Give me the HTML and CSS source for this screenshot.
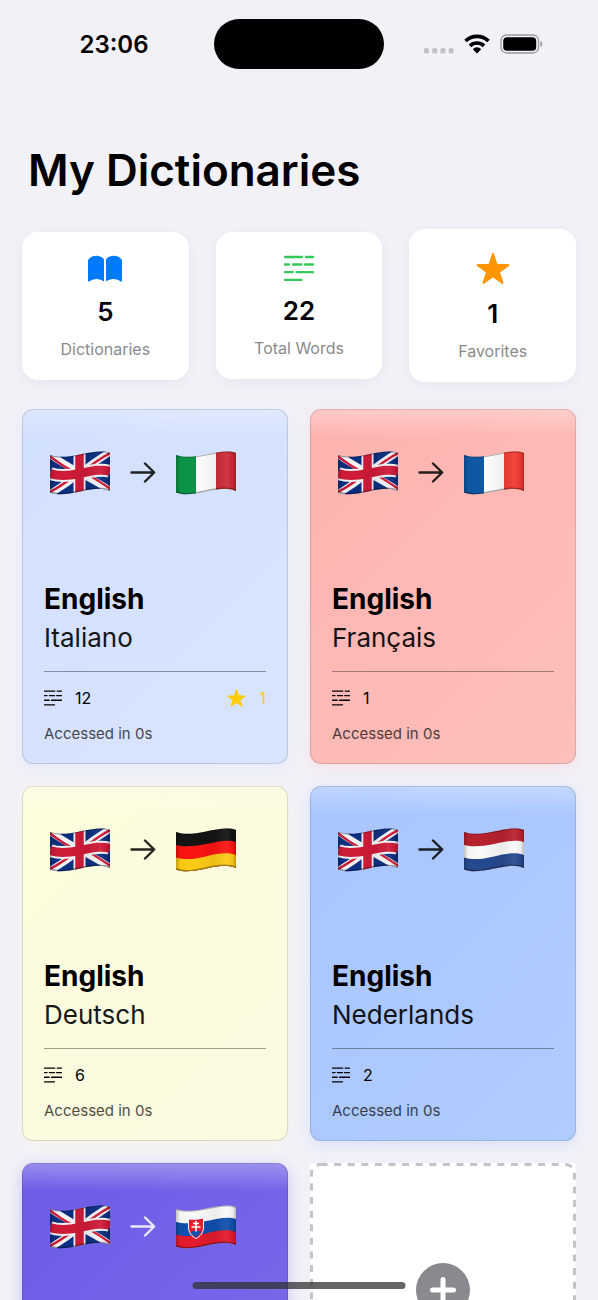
FILE: index.html
```
<!DOCTYPE html>
<html lang="en">

<head>
    <meta charset="UTF-8">
    <meta name="viewport" content="width=device-width, initial-scale=1.0">
    <title>My Dictionaries</title>
    <link rel="stylesheet" href="styles.css">
</head>

<body>
    <!-- Shared icons and flags -->
    <svg class="sprite" aria-hidden="true">
        <defs>
            <clipPath id="wave">
                <path d="M0 4 C8 7 18 6 30 3.5 S52 -1 60 2 V40 C52 36.500 44 37.500 30 40.500 S8 44.500 0 41.500 Z" />
            </clipPath>
            <linearGradient id="fold" x1="0" y1="0" x2="1" y2="0">
                <stop offset="0" stop-color="#000" stop-opacity=".22" />
                <stop offset=".07" stop-color="#000" stop-opacity=".02" />
                <stop offset=".3" stop-color="#000" stop-opacity="0" />
                <stop offset=".64" stop-color="#000" stop-opacity=".06" />
                <stop offset=".85" stop-color="#fff" stop-opacity=".06" />
                <stop offset=".94" stop-color="#000" stop-opacity=".04" />
                <stop offset="1" stop-color="#000" stop-opacity=".25" />
            </linearGradient>

            <symbol id="shade" viewBox="0 0 60 44">
                <g clip-path="url(#wave)">
                    <rect width="60" height="44" fill="url(#fold)" />
                    <path d="M0 4 C8 7 18 6 30 3.500 S52 -1 60 2" fill="none" stroke="#000" stroke-opacity=".28" stroke-width="2" />
                    <path d="M60 40 C52 36.500 44 37.500 30 40.500 S8 44.500 0 41.500" fill="none" stroke="#000" stroke-opacity=".35" stroke-width="2.500" />
                </g>
            </symbol>

            <symbol id="flag-gb" viewBox="0 0 60 44">
                <g clip-path="url(#wave)">
                    <rect width="60" height="44" fill="#0b2f80" />
                    <g fill="none" stroke="#f4f4f6" stroke-width="7">
                        <path d="M-2 2 C10 11 20 16 30 22 S50 32 62 41" />
                        <path d="M-2 44 C10 37 20 30 30 22 S50 7 62 0" />
                    </g>
                    <g fill="none" stroke="#cf1b38" stroke-width="2.400">
                        <path d="M-2 4 C8 12 16 17 26 22" />
                        <path d="M34 21 C44 27 52 32 62 39" />
                        <path d="M-2 42 C8 37 18 30 27 23" />
                        <path d="M32 22 C42 13 50 7 62 1" />
                    </g>
                    <path d="M0 22.500 C8 25.500 18 25 30 22.500 S52 17.500 60 20.500" fill="none" stroke="#f4f4f6" stroke-width="13" />
                    <path d="M29.500 0 V44" stroke="#f4f4f6" stroke-width="12" />
                    <path d="M0 22.500 C8 25.500 18 25 30 22.500 S52 17.500 60 20.500" fill="none" stroke="#cf1b38" stroke-width="9" />
                    <path d="M29.500 0 V44" stroke="#cf1b38" stroke-width="8.500" />
                </g>
                <use href="#shade" width="60" height="44" />
            </symbol>

            <symbol id="flag-it" viewBox="0 0 60 44">
                <g clip-path="url(#wave)">
                    <rect width="20" height="44" fill="#0b9447" />
                    <rect x="20" width="20" height="44" fill="#fff" />
                    <rect x="40" width="20" height="44" fill="#cb2a36" />
                </g>
                <use href="#shade" width="60" height="44" />
            </symbol>

            <symbol id="flag-fr" viewBox="0 0 60 44">
                <g clip-path="url(#wave)">
                    <rect width="20" height="44" fill="#0f58a4" />
                    <rect x="20" width="20" height="44" fill="#fff" />
                    <rect x="40" width="20" height="44" fill="#f03a32" />
                </g>
                <use href="#shade" width="60" height="44" />
            </symbol>

            <symbol id="flag-de" viewBox="0 0 60 44">
                <g clip-path="url(#wave)">
                    <rect width="60" height="44" fill="#141414" />
                    <path d="M0 17 C8 19 18 18.500 30 16 S52 11 60 14 V44 H0 Z" fill="#fb1512" />
                    <path d="M0 29.500 C8 32 18 31.500 30 28.500 S52 24 60 27 V44 H0 Z" fill="#fccb16" />
                </g>
                <use href="#shade" width="60" height="44" />
            </symbol>

            <symbol id="flag-nl" viewBox="0 0 60 44">
                <g clip-path="url(#wave)">
                    <rect width="60" height="44" fill="#b8222f" />
                    <path d="M0 17 C8 19 18 18.500 30 16 S52 11 60 14 V44 H0 Z" fill="#fafafa" />
                    <path d="M0 29.500 C8 32 18 31.500 30 28.500 S52 24 60 27 V44 H0 Z" fill="#264a90" />
                </g>
                <use href="#shade" width="60" height="44" />
            </symbol>

            <symbol id="flag-sk" viewBox="0 0 60 44">
                <g clip-path="url(#wave)">
                    <rect width="60" height="44" fill="#fafafa" />
                    <path d="M0 17 C8 19 18 18.500 30 16 S52 11 60 14 V44 H0 Z" fill="#1050ae" />
                    <path d="M0 29.500 C8 32 18 31.500 30 28.500 S52 24 60 27 V44 H0 Z" fill="#e31b2c" />
                </g>
                <use href="#shade" width="60" height="44" />
                <path d="M12.500 14 Q20 15 27.500 13 V22 C27.500 28 24 31.500 20 33.500 C16 31.500 12.500 28 12.500 22 Z" fill="#e31b2c" stroke="#fff" stroke-width="1" />
                <path d="M15 28 Q17.500 24.500 20 26.500 Q22.500 24.500 25 27 Q23 31 20 32.500 Q17 31 15 28 Z" fill="#1050ae" />
                <path d="M20 16 V26.500 M17 18.500 H23 M15.500 22 H24.500" fill="none" stroke="#fff" stroke-width="1.600" />
            </symbol>

            <symbol id="icon-arrow" viewBox="0 0 26 22">
                <path d="M1.500 10.500 H24 M15 1.500 L24.200 10.500 L15 19.500" fill="none" stroke="currentColor" stroke-width="2.400" stroke-linecap="round" stroke-linejoin="round" />
            </symbol>

            <symbol id="icon-words" viewBox="0 0 30 26">
                <path d="M1 1.500 H18 M22 1.500 H29 M1 9 H5 M9 9 H17.500 M21 9 H29 M1 16.700 H8.500 M12.500 16.700 H29 M1 24.400 H17.500" fill="none" stroke="currentColor" stroke-width="2.300" stroke-linecap="round" />
            </symbol>

            <symbol id="icon-star" viewBox="0 0 34 32">
                <path d="M17 1.500 L20.700 12.500 L32.300 12.600 L23 19.500 L26.500 30.500 L17 23.800 L7.500 30.500 L11 19.500 L1.700 12.600 L13.300 12.500 Z" fill="currentColor" stroke="currentColor" stroke-width="2" stroke-linejoin="round" />
            </symbol>
        </defs>
    </svg>

    <div class="app">
        <header class="status-bar">
            <span class="time">23:06</span>
            <span class="island"></span>
            <div class="indicators">
                <svg class="dots" viewBox="0 0 30 20" aria-hidden="true">
                    <rect x="0" y="14" width="5" height="5.500" rx="1.500" />
                    <rect x="8.200" y="14" width="5" height="5.500" rx="1.500" />
                    <rect x="16.400" y="14" width="5" height="5.500" rx="1.500" />
                    <rect x="24.600" y="14" width="5" height="5.500" rx="1.500" />
                </svg>
                <svg class="wifi" viewBox="0 0 26 20" aria-hidden="true">
                    <path d="M1.500 7 A16.500 16.500 0 0 1 24.500 7 M6 11.800 A10.200 10.200 0 0 1 20 11.800" fill="none" stroke="#000" stroke-width="3.700" />
                    <path d="M8.800 15.300 A5.500 5.500 0 0 1 17.200 15.300 L13 19.500 Z" />
                </svg>
                <svg class="battery" viewBox="0 0 43 20" aria-hidden="true">
                    <rect x="1" y="1" width="37.500" height="18" rx="5.500" fill="none" stroke="#9b9aa0" stroke-width="1.300" />
                    <rect x="3.200" y="3.200" width="33" height="13.600" rx="3.800" />
                    <path d="M40.300 7 C43 8 43 12 40.300 13 Z" fill="#9b9aa0" />
                </svg>
            </div>
        </header>

        <main class="content">
            <h1>My Dictionaries</h1>

            <section class="stats">
                <div class="stat">
                    <svg class="stat-icon book" viewBox="0 0 36 30" aria-hidden="true">
                        <path d="M1 6 C4 .8 13.500 0 17 5.500 V27.500 C13 24 6 24 2.200 27.500 Q1 28 1 26.500 Z M19 5.500 C22.500 0 32 .8 35 6 V26.500 Q35 28 33.800 27.500 C30 24 23 24 19 27.500 Z" fill="currentColor" />
                    </svg>
                    <strong>5</strong>
                    <span>Dictionaries</span>
                </div>
                <div class="stat">
                    <svg class="stat-icon words" aria-hidden="true"><use href="#icon-words" /></svg>
                    <strong>22</strong>
                    <span>Total Words</span>
                </div>
                <div class="stat">
                    <svg class="stat-icon star" aria-hidden="true"><use href="#icon-star" /></svg>
                    <strong>1</strong>
                    <span>Favorites</span>
                </div>
            </section>

            <section class="grid">
                <article class="card card-it">
                    <div class="flags">
                        <svg class="flag"><use href="#flag-gb" /></svg>
                        <svg class="arrow"><use href="#icon-arrow" /></svg>
                        <svg class="flag"><use href="#flag-it" /></svg>
                    </div>
                    <h2>English</h2>
                    <p class="target">Italiano</p>
                    <div class="meta">
                        <svg class="words-icon"><use href="#icon-words" /></svg>
                        <span>12</span>
                        <span class="favorite">
                            <svg class="star-icon"><use href="#icon-star" /></svg>
                            1
                        </span>
                    </div>
                    <p class="accessed">Accessed in 0s</p>
                </article>

                <article class="card card-fr">
                    <div class="flags">
                        <svg class="flag"><use href="#flag-gb" /></svg>
                        <svg class="arrow"><use href="#icon-arrow" /></svg>
                        <svg class="flag"><use href="#flag-fr" /></svg>
                    </div>
                    <h2>English</h2>
                    <p class="target">Français</p>
                    <div class="meta">
                        <svg class="words-icon"><use href="#icon-words" /></svg>
                        <span>1</span>
                    </div>
                    <p class="accessed">Accessed in 0s</p>
                </article>

                <article class="card card-de">
                    <div class="flags">
                        <svg class="flag"><use href="#flag-gb" /></svg>
                        <svg class="arrow"><use href="#icon-arrow" /></svg>
                        <svg class="flag"><use href="#flag-de" /></svg>
                    </div>
                    <h2>English</h2>
                    <p class="target">Deutsch</p>
                    <div class="meta">
                        <svg class="words-icon"><use href="#icon-words" /></svg>
                        <span>6</span>
                    </div>
                    <p class="accessed">Accessed in 0s</p>
                </article>

                <article class="card card-nl">
                    <div class="flags">
                        <svg class="flag"><use href="#flag-gb" /></svg>
                        <svg class="arrow"><use href="#icon-arrow" /></svg>
                        <svg class="flag"><use href="#flag-nl" /></svg>
                    </div>
                    <h2>English</h2>
                    <p class="target">Nederlands</p>
                    <div class="meta">
                        <svg class="words-icon"><use href="#icon-words" /></svg>
                        <span>2</span>
                    </div>
                    <p class="accessed">Accessed in 0s</p>
                </article>

                <article class="card card-sk">
                    <div class="flags">
                        <svg class="flag"><use href="#flag-gb" /></svg>
                        <svg class="arrow"><use href="#icon-arrow" /></svg>
                        <svg class="flag"><use href="#flag-sk" /></svg>
                    </div>
                </article>

                <button type="button" class="add-card" aria-label="Add dictionary">
                    <svg class="outline" aria-hidden="true"><rect x="1.500" y="1.500" rx="9" /></svg>
                    <svg class="plus" viewBox="0 0 54 54" aria-hidden="true">
                        <circle cx="27" cy="27" r="27" fill="#8a8a8e" />
                        <path d="M27 16.500 V37.500 M16.500 27 H37.500" stroke="#fff" stroke-width="5" stroke-linecap="round" />
                    </svg>
                </button>
            </section>
        </main>

        <div class="home-indicator"></div>
    </div>
</body>

</html>
```
FILE: styles.css
```
/* General Styles */
* {
    box-sizing: border-box;
}

body {
    margin: 0;
    font-family: Inter, "Liberation Sans", sans-serif;
    background-color: #f2f1f8;
    color: #000;
}

h1,
h2,
p {
    margin: 0;
}

svg {
    display: block;
    flex-shrink: 0;
}

.sprite {
    position: absolute;
    width: 0;
    height: 0;
}

.app {
    height: 100vh;
    overflow-y: auto;
    scrollbar-width: none;
}

/* Status Bar */
.status-bar {
    display: grid;
    grid-template-columns: 1fr 170px 1fr;
    align-items: center;
    height: 88px;
}

.time {
    padding-left: 14px;
    text-align: center;
    font-size: 24px;
    font-weight: 600;
}

.island {
    height: 50px;
    border-radius: 25px;
    background: #000;
}

.indicators {
    display: flex;
    justify-content: center;
    gap: 10px;
    padding-right: 16px;
}

.dots {
    width: 30px;
    height: 20px;
    fill: #c3c2c8;
}

.wifi {
    width: 26px;
    height: 20px;
}

.battery {
    width: 43px;
    height: 20px;
}

/* Page */
.content {
    padding: 54px 22px 34px;
}

h1 {
    padding-left: 6px;
    font-size: 44px;
    line-height: 56px;
    font-weight: 600;
}

/* Stats */
.stats {
    display: grid;
    grid-template-columns: repeat(3, 1fr);
    align-items: center;
    gap: 27px;
    margin-top: 31px;
}

.stat {
    display: flex;
    flex-direction: column;
    align-items: center;
    gap: 12px;
    padding: 22px 0 21px;
    border-radius: 16px;
    background: #fff;
    box-shadow: 0 3px 12px rgba(60, 60, 100, 0.06);
}

.stat strong {
    font-size: 26px;
    line-height: 31px;
    font-weight: 600;
}

.stat span {
    font-size: 16px;
    line-height: 20px;
    color: #8a8a8e;
}

.book {
    width: 36px;
    height: 30px;
    color: #007aff;
}

.words {
    width: 30px;
    height: 29px;
    color: #34c759;
}

.star {
    width: 34px;
    height: 35px;
    color: #ff9500;
}

/* Dictionary Cards */
.grid {
    display: grid;
    grid-template-columns: 1fr 1fr;
    gap: 22px;
    margin-top: 27px;
}

.card {
    min-height: 355px;
    padding: 21px 21px 19px;
    border: 1px solid rgba(0, 0, 0, 0.12);
    border-radius: 11px;
    background-origin: border-box;
}

.card-it {
    background-image: linear-gradient(rgba(255, 255, 255, 0.25), rgba(255, 255, 255, 0) 28px), linear-gradient(135deg, #d2e0ff, #d9e4ff);
    box-shadow: 0 4px 14px rgba(210, 224, 255, 0.4);
}

.card-fr {
    background-image: linear-gradient(rgba(255, 255, 255, 0.3), rgba(255, 255, 255, 0) 28px), linear-gradient(135deg, #ffb3b0, #fcbfbb);
    box-shadow: 0 4px 14px rgba(255, 179, 176, 0.25);
}

.card-de {
    background-image: linear-gradient(rgba(255, 255, 255, 0.25), rgba(255, 255, 255, 0) 28px), linear-gradient(135deg, #fdfcdc, #fbf9e0);
    box-shadow: 0 4px 14px rgba(253, 252, 220, 0.4);
}

.card-nl {
    background-image: linear-gradient(rgba(255, 255, 255, 0.3), rgba(255, 255, 255, 0) 28px), linear-gradient(135deg, #a8c5ff, #b0ccff);
    box-shadow: 0 4px 14px rgba(168, 197, 255, 0.35);
}

.card-sk {
    background-image: linear-gradient(rgba(255, 255, 255, 0.3), rgba(255, 255, 255, 0) 28px), linear-gradient(135deg, #6c5ce7, #7d6de9);
    box-shadow: 0 4px 14px rgba(108, 92, 231, 0.3);
    color: #fff;
}

.flags {
    display: flex;
    align-items: center;
    gap: 20px;
    padding: 20px 6px 85px;
}

.flag {
    width: 60px;
    height: 44px;
}

.arrow {
    width: 26px;
    height: 22px;
    opacity: 0.85;
}

.card h2 {
    font-size: 28px;
    line-height: 38px;
    font-weight: 700;
}

.target {
    padding-bottom: 13px;
    border-bottom: 1px solid rgba(0, 0, 0, 0.4);
    font-size: 26px;
    line-height: 40px;
    opacity: 0.9;
}

.meta {
    display: flex;
    align-items: center;
    gap: 13px;
    margin-top: 15px;
    font-size: 16px;
    line-height: 22px;
}

.words-icon {
    width: 18px;
    height: 16px;
}

.favorite {
    display: flex;
    align-items: center;
    gap: 13px;
    margin-left: auto;
    color: #ffcc00;
}

.star-icon {
    width: 19px;
    height: 18px;
}

.accessed {
    margin-top: 15px;
    font-size: 15px;
    line-height: 20px;
    opacity: 0.7;
}

/* Add Card */
.add-card {
    position: relative;
    display: flex;
    justify-content: center;
    padding: 100px 0 0;
    border: none;
    background: #fff;
    cursor: pointer;
}

.outline {
    position: absolute;
    inset: 0;
    width: 100%;
    height: 100%;
}

.outline rect {
    width: calc(100% - 3px);
    height: calc(100% - 3px);
    fill: none;
    stroke: #c4c4c6;
    stroke-width: 3px;
    stroke-dasharray: 7 6.6;
}

.plus {
    width: 54px;
    height: 54px;
}

/* Home Indicator */
.home-indicator {
    position: fixed;
    bottom: 11px;
    left: 50%;
    width: 213px;
    height: 7px;
    border-radius: 4px;
    background: rgba(50, 50, 50, 0.75);
    transform: translateX(-50%);
}
```
